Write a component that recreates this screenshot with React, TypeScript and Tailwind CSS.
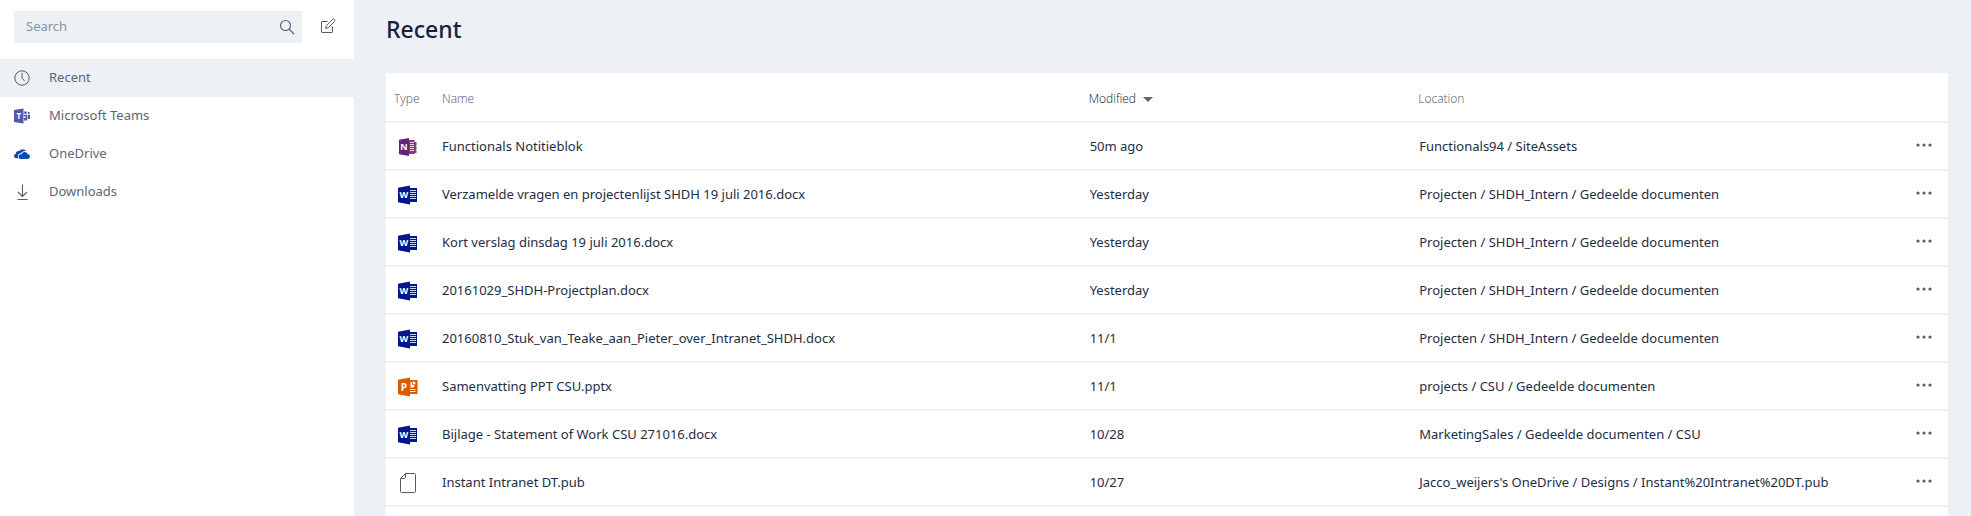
import * as React from 'react';

type FileType = 'onenote' | 'word' | 'powerpoint' | 'generic';

interface FileEntry {
  type: FileType;
  name: string;
  modified: string;
  location: string;
}

const files: FileEntry[] = [
  { type: 'onenote', name: 'Functionals Notitieblok', modified: '50m ago', location: 'Functionals94 / SiteAssets' },
  {
    type: 'word',
    name: 'Verzamelde vragen en projectenlijst SHDH 19 juli 2016.docx',
    modified: 'Yesterday',
    location: 'Projecten / SHDH_Intern / Gedeelde documenten'
  },
  {
    type: 'word',
    name: 'Kort verslag dinsdag 19 juli 2016.docx',
    modified: 'Yesterday',
    location: 'Projecten / SHDH_Intern / Gedeelde documenten'
  },
  {
    type: 'word',
    name: '20161029_SHDH-Projectplan.docx',
    modified: 'Yesterday',
    location: 'Projecten / SHDH_Intern / Gedeelde documenten'
  },
  {
    type: 'word',
    name: '20160810_Stuk_van_Teake_aan_Pieter_over_Intranet_SHDH.docx',
    modified: '11/1',
    location: 'Projecten / SHDH_Intern / Gedeelde documenten'
  },
  {
    type: 'powerpoint',
    name: 'Samenvatting PPT CSU.pptx',
    modified: '11/1',
    location: 'projects / CSU / Gedeelde documenten'
  },
  {
    type: 'word',
    name: 'Bijlage - Statement of Work CSU 271016.docx',
    modified: '10/28',
    location: 'MarketingSales / Gedeelde documenten / CSU'
  },
  {
    type: 'generic',
    name: 'Instant Intranet DT.pub',
    modified: '10/27',
    location: "Jacco_weijers's OneDrive / Designs / Instant%20Intranet%20DT.pub"
  }
];

const letterClass = "font-['Open_Sans',sans-serif] font-bold";

const OneNoteIcon = () => (
  <svg width="20" height="20" viewBox="0 0 20 20" role="img" aria-label="OneNote">
    <path d="M11 3h5.500v2H18.500v3.500h-.7v1h.7v3h-.7v1h.7V16H16.500v1H11z" fill="#80397b" />
    <path d="M12 5.500h4M12 7.500h4M12 9.500h4M12 11.500h4M12 13.500h4" stroke="#fff" strokeWidth="0.800" />
    <path d="M1 2.800 11 1v18L1 17.200z" fill="#68217a" />
    <text x="6" y="13.300" textAnchor="middle" fontSize="9" fill="#fff" className={letterClass}>
      N
    </text>
  </svg>
);

const WordIcon = () => (
  <svg width="20" height="20" viewBox="0 0 20 20" role="img" aria-label="Word">
    <path d="M11 3h8v14h-8z" fill="#00188f" />
    <path d="M12 5.500h6M12 7.500h6M12 9.500h6M12 11.500h6M12 13.500h6" stroke="#fff" strokeWidth="0.800" />
    <path d="M0 2.800 12 .5v19L0 17.200z" fill="#00188f" />
    <text x="5.800" y="13" textAnchor="middle" fontSize="9" fill="#fff" className={letterClass}>
      W
    </text>
  </svg>
);

const PowerPointIcon = () => (
  <svg width="20" height="20" viewBox="0 0 20 20" role="img" aria-label="PowerPoint">
    <path d="M11 3h8.500v14H11z" fill="#dc5900" />
    <path d="M12.500 5.200V10.500a3 3 0 0 0 4.300-2.700h-2.700V5z" fill="#fff" />
    <path d="M14.800 4.300V7h2.700a2.700 2.700 0 0 0-2.700-2.700z" fill="#fff" />
    <path d="M12 12.500h5.500M12 14.500h5.500" stroke="#fff" strokeWidth="0.900" />
    <path d="M0 2.800 12 .5v19L0 17.200z" fill="#dc5900" />
    <text x="6" y="13.500" textAnchor="middle" fontSize="10" fill="#fff" className={letterClass}>
      P
    </text>
  </svg>
);

const GenericIcon = () => (
  <svg width="20" height="20" viewBox="0 0 20 20" fill="none" stroke="#525c6d" role="img" aria-label="File">
    <path d="M7.500.5h9a1 1 0 0 1 1 1v17a1 1 0 0 1-1 1h-13a1 1 0 0 1-1-1v-13z" />
    <path d="M7.500.5v4a1 1 0 0 1-1 1h-4" />
  </svg>
);

const fileIcons: Record<FileType, React.FC> = {
  onenote: OneNoteIcon,
  word: WordIcon,
  powerpoint: PowerPointIcon,
  generic: GenericIcon
};

const SearchIcon = () => (
  <svg width="16" height="16" viewBox="0 0 16 16" fill="none" stroke="#525c6d" strokeWidth="1.100" aria-hidden="true">
    <circle cx="6.500" cy="6.500" r="5" />
    <path d="m10 10 5 5" />
  </svg>
);

const ComposeIcon = () => (
  <svg width="16" height="16" viewBox="0 0 16 16" fill="none" stroke="#525c6d" aria-hidden="true">
    <path d="M7.500 3.500H2a.5.5 0 0 0-.5.500v10a.5.5 0 0 0 .5.500h10a.5.5 0 0 0 .5-.500V8.500" />
    <path d="m5.500 10.500.8-2.800 6.200-6.200a1.300 1.300 0 0 1 2 2L8.300 9.700z" />
  </svg>
);

const ClockIcon = () => (
  <svg width="16" height="16" viewBox="0 0 16 16" fill="none" stroke="#525c6d" aria-hidden="true">
    <circle cx="8" cy="8" r="7.200" />
    <path d="M8 3v5l2.500 3" />
  </svg>
);

const TeamsIcon = () => (
  <svg width="16" height="16" viewBox="0 0 16 16" aria-hidden="true">
    <path d="M0 2 9.500.5v15L0 14z" fill="#5558af" />
    <circle cx="11.500" cy="4.700" r="1.400" fill="#5558af" />
    <circle cx="14.700" cy="4.900" r="1.100" fill="#5558af" />
    <path d="M10 6.800h3.300v5.700H10zM13.900 6.800H16v4.200h-2.100z" fill="#5558af" />
    <path d="M10 8.300h1.500v1.500H10z" fill="#fff" />
    <text x="4.800" y="11" textAnchor="middle" fontSize="8" fill="#fff" className={letterClass}>
      T
    </text>
  </svg>
);

const OneDriveIcon = () => (
  <svg width="16" height="16" viewBox="0 0 16 16" fill="#094ab2" aria-hidden="true">
    <path d="M4.200 12.300H2.400A2.400 2.400 0 0 1 0 10c0-1.200.8-2.100 1.800-2.300C1.900 6 3.100 5 4.500 5c.3 0 .6 0 .8.100A4.200 4.200 0 0 1 12.200 5.100C9.600 4.500 7.600 5.700 7 7.200c-2 0-3.300 1.400-3.200 3.100 0 .8.100 1.400.4 2z" />
    <path d="M6.800 13a2.300 2.300 0 0 1-2.300-2.400c0-1.300 1-2.400 2.500-2.400h.6a3.200 3.200 0 0 1 6-.2A2.500 2.500 0 0 1 16 10.500 2.500 2.500 0 0 1 13.600 13z" />
  </svg>
);

const DownloadIcon = () => (
  <svg width="16" height="16" viewBox="0 0 16 16" fill="none" stroke="#525c6d" strokeWidth="1.100" aria-hidden="true">
    <path d="M8.500.5V12M4 8l4.500 4.500L13 8M3.500 15.500h10" />
  </svg>
);

const navItems = [
  { label: 'Recent', Icon: ClockIcon, active: true },
  { label: 'Microsoft Teams', Icon: TeamsIcon, active: false },
  { label: 'OneDrive', Icon: OneDriveIcon, active: false },
  { label: 'Downloads', Icon: DownloadIcon, active: false }
];

const Sidebar = () => (
  <aside className="w-[354px] shrink-0 bg-white">
    <div className="flex items-center gap-[18px] pt-[11px] pb-4 pl-[14px]">
      <label className="flex h-8 w-72 items-center bg-[#edf0f5] pr-[7px] pl-3">
        <input
          type="text"
          placeholder="Search"
          aria-label="Search"
          className="min-w-0 flex-1 bg-transparent outline-none placeholder:text-[#8b919d]"
        />
        <SearchIcon />
      </label>
      <button type="button" aria-label="New message" className="pb-0.5">
        <ComposeIcon />
      </button>
    </div>
    <nav>
      {navItems.map(({ label, Icon, active }) => (
        <a
          key={label}
          href="#"
          aria-current={active ? 'page' : undefined}
          className={
            active
              ? 'flex h-[38px] items-center gap-[19px] bg-[#edf0f5] pb-px pl-[14px]'
              : 'flex h-[38px] items-center gap-[19px] pb-px pl-[14px]'
          }
        >
          <Icon />
          {label}
        </a>
      ))}
    </nav>
  </aside>
);

const FileRow = ({ file }: { file: FileEntry }) => {
  const Icon = fileIcons[file.type];
  return (
    <tr className="h-12 border-b-2 border-[#edf0f5]">
      <td className="pt-px pl-3">
        <Icon />
      </td>
      <td className="pt-0.5">{file.name}</td>
      <td className="pt-0.5 pl-px">{file.modified}</td>
      <td className="pt-0.5 pl-px">{file.location}</td>
      <td className="pr-4">
        <button type="button" aria-label="More options" className="ml-auto block pb-0.5">
          <svg width="16" height="4" viewBox="0 0 16 4" fill="#525c6d" aria-hidden="true">
            <circle cx="2" cy="2" r="1.600" />
            <circle cx="8" cy="2" r="1.600" />
            <circle cx="14" cy="2" r="1.600" />
          </svg>
        </button>
      </td>
    </tr>
  );
};

const App = () => (
  <div className="flex min-h-screen bg-[#edf0f5] font-['Noto_Sans','Open_Sans',sans-serif] text-[13px] text-[#5d6676]">
    <Sidebar />
    <main className="flex min-w-0 flex-1 flex-col pr-[23px] pl-8">
      <h1 className="pt-[11px] pb-[26px] text-[23px] leading-9 font-medium text-[#16233a]">Recent</h1>
      <div className="flex-1 bg-white">
        <table className="w-full table-fixed text-left text-[#222e44]">
          <thead>
            <tr className="h-[49px] border-b-2 border-[#edf0f5] font-['Open_Sans',sans-serif] text-xs text-[#4b5563]">
              <th className="w-14 pt-1 pl-2 font-light">Type</th>
              <th className="w-[41.4%] pt-1 font-light">Name</th>
              <th className="w-[21.1%] pt-1 font-light" aria-sort="descending">
                <button type="button" className="flex items-center gap-[7px] text-[#0b1526]">
                  Modified
                  <svg width="10" height="5" viewBox="0 0 10 5" fill="#60646e" aria-hidden="true">
                    <path d="M0 0h10L5 5z" />
                  </svg>
                </button>
              </th>
              <th className="pt-1 font-light">Location</th>
              <th className="w-12" aria-label="Options" />
            </tr>
          </thead>
          <tbody>
            {files.map(file => (
              <FileRow key={file.name} file={file} />
            ))}
          </tbody>
        </table>
      </div>
    </main>
  </div>
);

export default App;
